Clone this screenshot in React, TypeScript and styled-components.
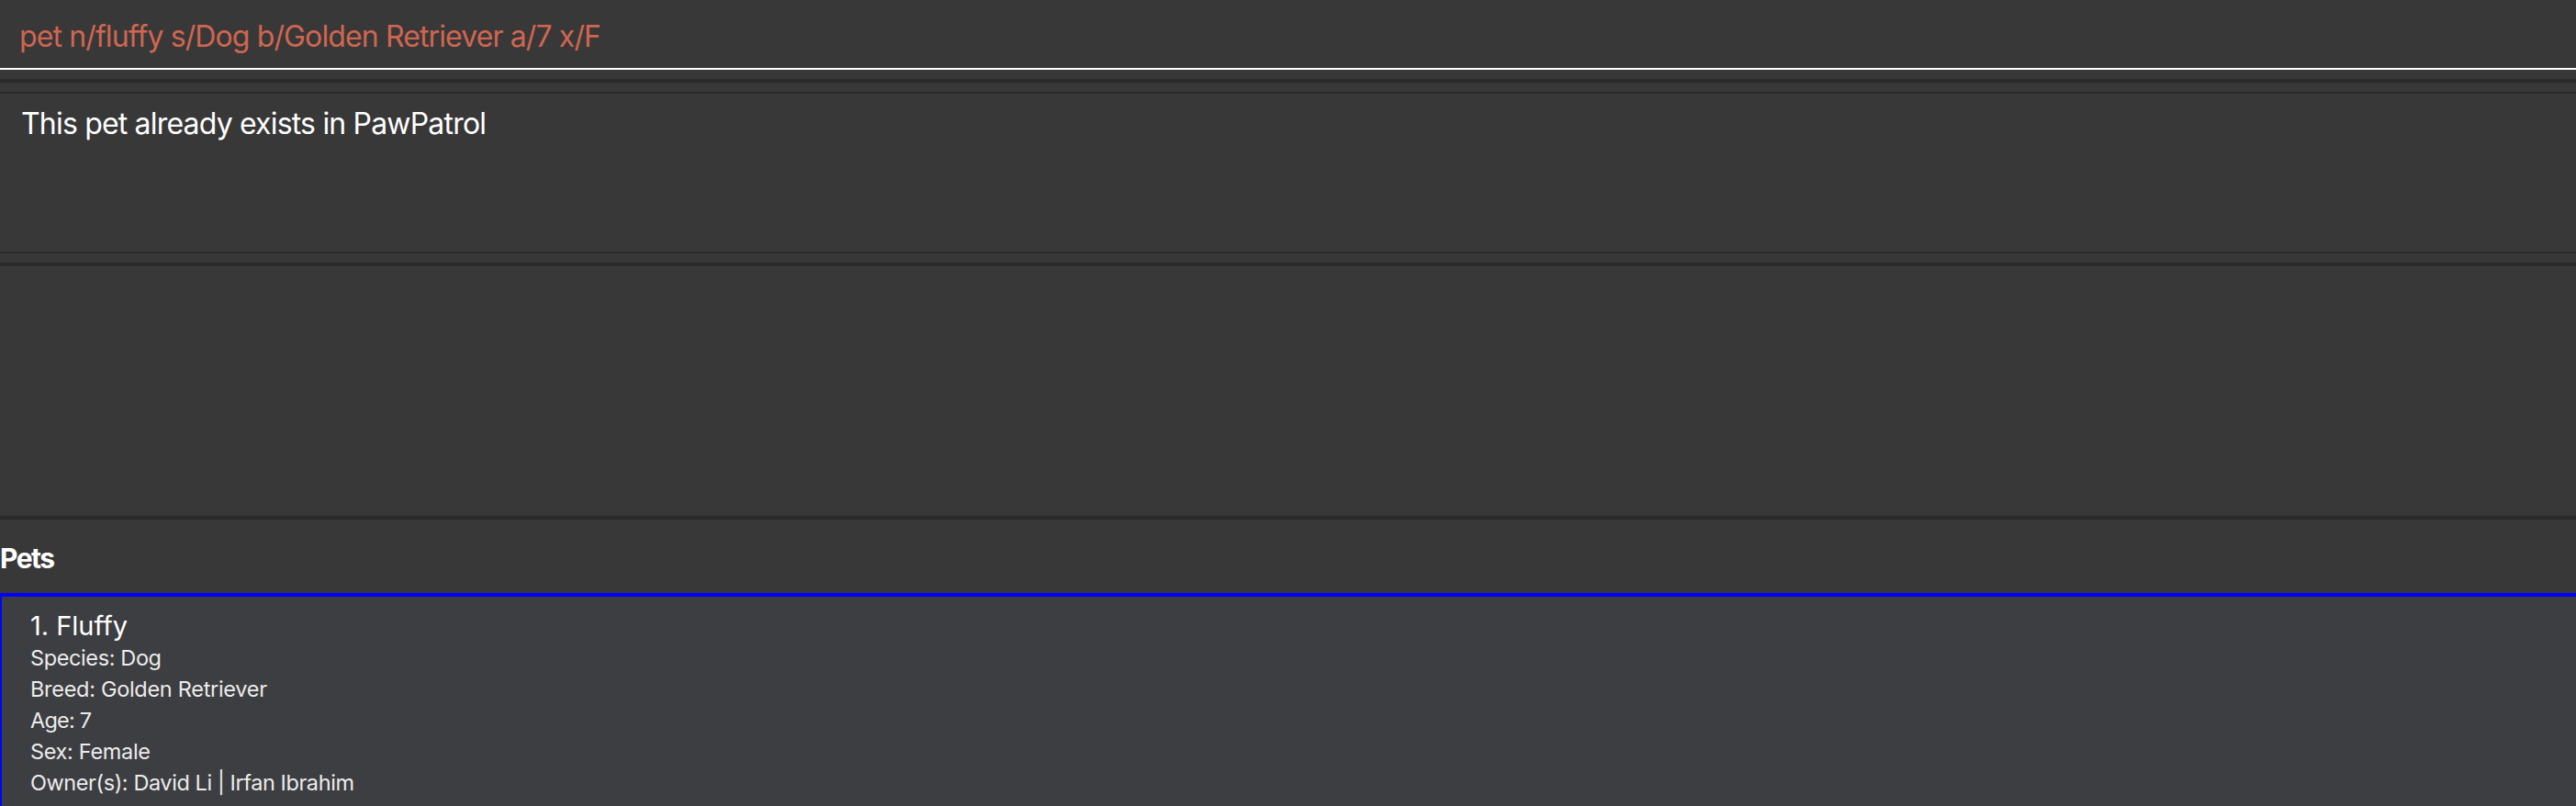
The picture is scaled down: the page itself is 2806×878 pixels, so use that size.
import React, { useLayoutEffect, useRef, useState } from "react";
import styled, { createGlobalStyle } from "styled-components";

const GlobalStyle = createGlobalStyle`
  html, body {
    margin: 0;
    padding: 0;
    background: #383838;
  }
  body {
    font-family: Inter, "Noto Sans", "DejaVu Sans", sans-serif;
    overflow: hidden;
  }
  #root {
    width: 2806px;
    height: 878px;
  }
`;

const Page = styled.div`
  display: flex;
  flex-direction: column;
  width: 100%;
  height: 878px;
  background: #383838;
  overflow: hidden;
`;

const CommandBar = styled.div`
  height: 76px;
  box-sizing: border-box;
  border-bottom: 2px solid #ffffff;
  padding: 21px 0 0 21px;
  flex: none;
`;

const CommandText = styled.div`
  font-size: 32px;
  line-height: 38px;
  color: #d06651;
  white-space: nowrap;
`;

const Divider = styled.div<{ $above: number; $below: number }>`
  height: 4px;
  background: #2a2a2a;
  margin-top: ${(p) => p.$above}px;
  margin-bottom: ${(p) => p.$below}px;
  flex: none;
`;

const ResultBox = styled.div`
  height: 176px;
  box-sizing: border-box;
  border-top: 2px solid #2a2a2a;
  border-bottom: 2px solid #2a2a2a;
  padding: 14px 0 0 23px;
  flex: none;
`;

const ResultText = styled.div`
  font-size: 32px;
  line-height: 38px;
  color: #ffffff;
  white-space: nowrap;
`;

const EmptyPanel = styled.div`
  height: 272px;
  flex: none;
`;

const ListHeader = styled.div`
  height: 80px;
  box-sizing: border-box;
  padding-top: 24px;
  font-size: 30px;
  line-height: 36px;
  font-weight: 700;
  color: #ffffff;
  flex: none;
`;

const Card = styled.div`
  flex: 1;
  background: #3d3e41;
  border-top: 4px solid #0000ff;
  border-left: 2px solid #0000ff;
  padding: 14px 0 0 31px;
  display: flex;
  flex-direction: column;
`;

const CardTitle = styled.div`
  font-size: 29px;
  line-height: 36px;
  color: #ffffff;
`;

const CardField = styled.div`
  font-size: 23.5px;
  line-height: 34px;
  color: #ececec;
`;

const Fit = styled.span`
  display: inline-block;
  white-space: nowrap;
`;

/* Sets letter-spacing at run time so the line takes the width it has in the reference. */
function FitText({ text, width }: { text: string; width: number }) {
  const ref = useRef<HTMLSpanElement>(null);
  const [spacing, setSpacing] = useState(0);
  useLayoutEffect(() => {
    const measure = () => {
      const el = ref.current;
      if (!el) return;
      el.style.letterSpacing = "0px";
      const w = el.getBoundingClientRect().width;
      const next = (width - w) / Math.max(1, text.length - 1);
      el.style.letterSpacing = `${next}px`;
      setSpacing(next);
    };
    measure();
    if (document.fonts && document.fonts.ready) {
      document.fonts.ready.then(measure);
    }
  }, [text, width]);
  return (
    <Fit ref={ref} style={{ letterSpacing: `${spacing}px` }}>
      {text}
    </Fit>
  );
}

const fields: { text: string; width: number }[] = [
  { text: "Species: Dog", width: 143 },
  { text: "Breed: Golden Retriever", width: 258 },
  { text: "Age: 7", width: 67 },
  { text: "Sex: Female", width: 131 },
  { text: "Owner(s): David Li | Irfan Ibrahim", width: 353 },
];

export default function App() {
  return (
    <>
      <GlobalStyle />
      <Page>
        <CommandBar>
          <CommandText>
            <FitText text="pet n/fluffy s/Dog b/Golden Retriever a/7 x/F" width={634} />
          </CommandText>
        </CommandBar>
        <Divider $above={10} $below={10} />
        <ResultBox>
          <ResultText>
            <FitText text="This pet already exists in PawPatrol" width={507} />
          </ResultText>
        </ResultBox>
        <Divider $above={10} $below={0} />
        <EmptyPanel />
        <Divider $above={0} $below={0} />
        <ListHeader>
          <FitText text="Pets" width={60} />
        </ListHeader>
        <Card>
          <CardTitle>
            <FitText text="1. Fluffy" width={106} />
          </CardTitle>
          {fields.map((f) => (
            <CardField key={f.text}>
              <FitText text={f.text} width={f.width} />
            </CardField>
          ))}
        </Card>
      </Page>
    </>
  );
}
